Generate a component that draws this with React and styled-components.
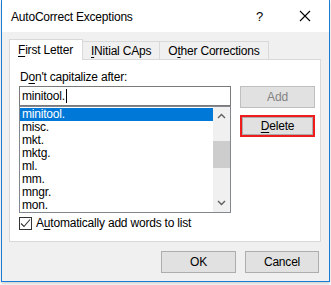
import styled, { createGlobalStyle } from 'styled-components';

const GlobalStyle = createGlobalStyle`
  html, body {
    margin: 0;
    padding: 0;
    background: #ffffff;
  }
  body {
    font-family: "Liberation Sans", Arial, sans-serif;
    font-size: 12px;
    letter-spacing: -0.2px;
    color: #000;
  }
`;

const words = ['minitool.', 'misc.', 'mkt.', 'mktg.', 'ml.', 'mm.', 'mngr.', 'mon.'];

const tabs = [
  { key: 'first', first: 'F', rest: 'irst Letter', active: true },
  { key: 'caps', first: 'I', rest: 'Nitial CAps' },
  { key: 'other', before: 'O', first: 't', rest: 'her Corrections' },
];

export default function App() {
  return (
    <Page>
      <GlobalStyle />
      <Window>
        <TitleBar>
          <Title>AutoCorrect Exceptions</Title>
          <TitleButtons>
            <Help>?</Help>
            <CloseIcon width="12" height="12" viewBox="0 0 12 12">
              <path d="M1 1 L11 11 M11 1 L1 11" stroke="#000" strokeWidth="1.1" fill="none" />
            </CloseIcon>
          </TitleButtons>
        </TitleBar>

        <Body>
          <TabRow>
            {tabs.map(tab => (
              <Tab key={tab.key} $active={tab.active}>
                {tab.before}
                <Key>{tab.first}</Key>
                {tab.rest}
              </Tab>
            ))}
          </TabRow>

          <Panel>
            <Columns>
              <LeftCol>
                <Label>
                  D<Key>o</Key>n't capitalize after:
                </Label>
                <TextBox>
                  minitool.<Caret />
                </TextBox>
                <ListBox>
                  <Items>
                    {words.map((word, i) => (
                      <Item key={word} $selected={i === 0}>
                        {word}
                      </Item>
                    ))}
                  </Items>
                  <ScrollBar>
                    <Arrow viewBox="0 0 9 6" width="9" height="6">
                      <path d="M1 5 L4.5 1.5 L8 5" stroke="#606060" strokeWidth="1.4" fill="none" />
                    </Arrow>
                    <Track>
                      <Thumb />
                    </Track>
                    <Arrow viewBox="0 0 9 6" width="9" height="6">
                      <path d="M1 1 L4.5 4.5 L8 1" stroke="#606060" strokeWidth="1.4" fill="none" />
                    </Arrow>
                  </ScrollBar>
                </ListBox>
              </LeftCol>
              <RightCol>
                <Button $disabled>Add</Button>
                <Highlight>
                  <Button $inner>
                    <Key>D</Key>elete
                  </Button>
                </Highlight>
              </RightCol>
            </Columns>
            <CheckRow>
              <CheckBox>
                <svg width="11" height="11" viewBox="0 0 11 11">
                  <path d="M1 5.5 L4 8.5 L10 1.5" stroke="#333" strokeWidth="1.1" fill="none" />
                </svg>
              </CheckBox>
              <span>
                A<Key>u</Key>tomatically add words to list
              </span>
            </CheckRow>
          </Panel>

          <Footer>
            <Button>OK</Button>
            <Button $wide>Cancel</Button>
          </Footer>
        </Body>
      </Window>
    </Page>
  );
}

const Page = styled.div`
  width: 331px;
  height: 285px;
  padding-left: 1px;
  box-sizing: border-box;
`;

const Window = styled.div`
  width: 329px;
  height: 282px;
  box-sizing: border-box;
  border: 1px solid #1c7cd5;
  border-top: none;
  background: #f0f0f0;
  box-shadow: 0 2px 3px rgba(0, 0, 0, 0.18);
  display: flex;
  flex-direction: column;
`;

const TitleBar = styled.div`
  height: 32px;
  background: #ffffff;
  display: flex;
  align-items: center;
  justify-content: space-between;
  padding: 0 18px 0 9px;
  flex-shrink: 0;
`;

const Title = styled.div`
  font-size: 12px;
  margin-top: 1px;
`;

const TitleButtons = styled.div`
  display: flex;
  align-items: center;
  gap: 36px;
`;

const Help = styled.span`
  font-size: 13px;
`;

const CloseIcon = styled.svg`
  display: block;
`;

const Body = styled.div`
  padding: 7px 9px 0 7px;
  display: flex;
  flex-direction: column;
`;

const TabRow = styled.div`
  display: flex;
  align-items: flex-end;
  height: 21px;
  position: relative;
  z-index: 1;
  margin-bottom: -1px;
`;

const Tab = styled.div`
  box-sizing: border-box;
  height: ${p => (p.$active ? '21px' : '19px')};
  padding: ${p => (p.$active ? '3px 9px 0 8px' : '2px 8px 0 8px')};
  border: 1px solid #d9d9d9;
  border-bottom: ${p => (p.$active ? 'none' : '1px solid #d9d9d9')};
  border-left: ${p => (p.$active ? '1px solid #d9d9d9' : 'none')};
  background: ${p => (p.$active ? '#ffffff' : '#f0f0f0')};
  white-space: nowrap;
  line-height: 15px;
`;

const Key = styled.span`
  text-decoration: underline;
  text-underline-offset: 2px;
`;

const Panel = styled.div`
  box-sizing: border-box;
  width: 312px;
  height: 183px;
  background: #ffffff;
  border: 1px solid #d9d9d9;
  padding: 8px 0 0 9px;
  display: flex;
  flex-direction: column;
`;

const Columns = styled.div`
  display: flex;
  gap: 9px;
`;

const LeftCol = styled.div`
  display: flex;
  flex-direction: column;
  width: 212px;
`;

const Label = styled.div`
  height: 18px;
  line-height: 18px;
  padding-left: 1px;
`;

const TextBox = styled.div`
  box-sizing: border-box;
  height: 20px;
  border: 1px solid #7a7a7a;
  padding-left: 2px;
  line-height: 18px;
  display: flex;
  align-items: center;
`;

const Caret = styled.span`
  display: inline-block;
  width: 1px;
  height: 14px;
  background: #000;
  margin-left: 1px;
`;

const ListBox = styled.div`
  box-sizing: border-box;
  height: 107px;
  border: 1px solid #828790;
  display: flex;
`;

const Items = styled.div`
  flex: 1;
  padding-top: 1px;
`;

const Item = styled.div`
  height: 13px;
  line-height: 13px;
  padding-left: 2px;
  background: ${p => (p.$selected ? '#0078d7' : 'transparent')};
  color: ${p => (p.$selected ? '#ffffff' : '#000')};
`;

const ScrollBar = styled.div`
  width: 17px;
  background: #f0f0f0;
  display: flex;
  flex-direction: column;
  align-items: center;
  padding: 6px 0;
  box-sizing: border-box;
`;

const Arrow = styled.svg`
  display: block;
  flex-shrink: 0;
`;

const Track = styled.div`
  flex: 1;
  width: 100%;
  padding-top: 22px;
`;

const Thumb = styled.div`
  height: 27px;
  background: #cdcdcd;
`;

const RightCol = styled.div`
  padding-top: 18px;
  display: flex;
  flex-direction: column;
  gap: 7px;
`;

const Button = styled.div`
  box-sizing: border-box;
  width: ${p => (p.$inner ? '70px' : p.$wide ? '74px' : '75px')};
  height: ${p => (p.$inner ? '17px' : '22px')};
  border: 1px solid ${p => (p.$disabled ? '#bfbfbf' : p.$inner ? 'transparent' : '#adadad')};
  background: #e1e1e1;
  color: ${p => (p.$disabled ? '#838383' : '#000')};
  display: flex;
  align-items: center;
  justify-content: center;
`;

const Highlight = styled.div`
  box-sizing: border-box;
  width: 75px;
  height: 22px;
  border: 2px solid #ee1c1c;
  background: #e1e1e1;
  display: flex;
  align-items: center;
  justify-content: center;
  outline: 1px solid #adadad;
  outline-offset: -3px;
`;

const CheckRow = styled.div`
  display: flex;
  align-items: center;
  gap: 4px;
  margin-top: 3px;
`;

const CheckBox = styled.div`
  box-sizing: border-box;
  width: 13px;
  height: 13px;
  border: 1px solid #333;
  background: #fff;
  display: flex;
  align-items: center;
  justify-content: center;
`;

const Footer = styled.div`
  display: flex;
  justify-content: flex-end;
  gap: 9px;
  padding-top: 9px;
  padding-right: 1px;
`;
